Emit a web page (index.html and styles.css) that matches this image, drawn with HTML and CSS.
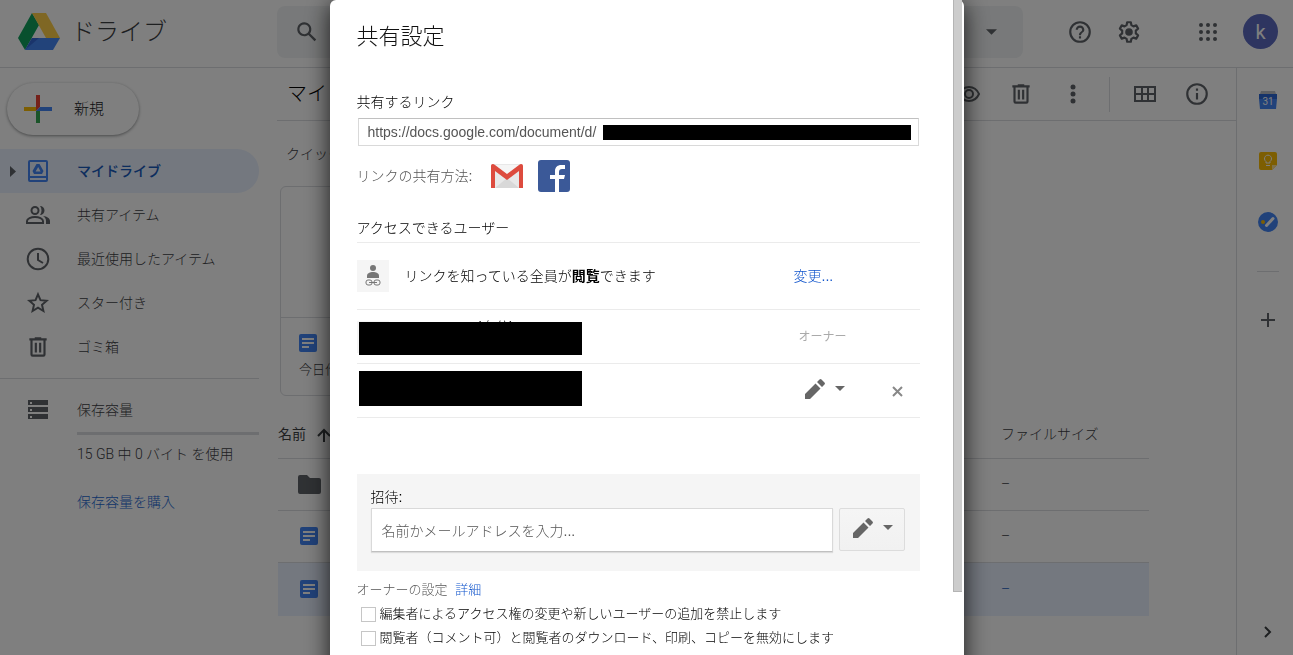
FILE: index.html
```html
<!DOCTYPE html>
<html lang="ja">
<head>
	<meta charset="UTF-8">
	<title>マイドライブ - ドライブ</title>
	<link rel="stylesheet" href="styles.css">
</head>
<body>
	<svg class="defs" aria-hidden="true">
		<symbol id="trash" viewBox="0 0 24 24"><path d="M15 4V3H9v1H4v2h1v13a2 2 0 0 0 2 2h10a2 2 0 0 0 2-2V6h1V4zm2 15H7V6h10zM9 8h2v9H9zm4 0h2v9h-2z"/></symbol>
		<symbol id="doc" viewBox="0 0 18 18"><rect width="18" height="18" rx="2" fill="#4285f4"/><path d="M3 4h12v2H3zm0 4h12v2H3zm0 4h7v2H3z" fill="#fff"/></symbol>
		<symbol id="pencil" viewBox="0 0 24 24"><path d="M2 17v5h5L17.500 11.500l-5-5zM21.500 7.500a1.400 1.400 0 0 0 0-2L18.500 2.500a1.400 1.400 0 0 0-2 0L14 5l5 5z"/></symbol>
		<symbol id="caret" viewBox="0 0 10 5"><path d="M0 0h10L5 5z"/></symbol>
	</svg>

	<div class="app">
		<header class="top">
			<a class="brand" href="#">
				<svg width="42" height="38" viewBox="0 0 42 38">
					<path d="M14 0L0 25l7 12L21 12z" fill="#11a05c"/>
					<path d="M14 0h14l14 25H28z" fill="#ffcf48"/>
					<path d="M14 25h28l-7 12H7z" fill="#4587f4"/>
					<path d="M14 25l7 0-14 12z" fill="#3569d6"/>
				</svg>
				<span>ドライブ</span>
			</a>
			<div class="search">
				<button class="ic" aria-label="検索"><svg width="26" height="26" viewBox="0 0 24 24"><path d="M20.500 19l-5.700-5.700a6.500 6.500 0 1 0-1.500 1.500l5.700 5.700zM9.500 14a4.500 4.500 0 1 1 0-9 4.500 4.500 0 0 1 0 9z"/></svg></button>
				<button class="ic" aria-label="検索オプション"><svg width="11" height="6"><use href="#caret"/></svg></button>
			</div>
			<div class="top-icons">
				<button class="ic" aria-label="サポート"><svg width="26" height="26" viewBox="0 0 24 24"><path d="M11 18h2v-2h-2zM12 2a10 10 0 1 0 0 20 10 10 0 0 0 0-20zm0 18a8 8 0 1 1 0-16 8 8 0 0 1 0 16zm0-14a4 4 0 0 0-4 4h2a2 2 0 1 1 4 0c0 2-3 1.750-3 5h2c0-2.250 3-2.500 3-5a4 4 0 0 0-4-4z"/></svg></button>
				<button class="ic" aria-label="設定"><svg width="26" height="26" viewBox="0 0 24 24"><path d="M10.300 3h3.400l.5 2.700 1.900 1.100 2.600-.9 1.700 3-2.100 1.800v2.600l2.100 1.800-1.700 3-2.600-.9-1.900 1.100-.5 2.700h-3.400l-.5-2.700-1.900-1.100-2.600.9-1.700-3 2.100-1.800v-2.600L3.600 8.900l1.700-3 2.600.9 1.900-1.100z" fill="none" stroke="#5f6368" stroke-width="2" stroke-linejoin="round"/><circle cx="12" cy="12" r="3.500"/></svg></button>
				<button class="ic apps" aria-label="Google アプリ"><svg width="18" height="18" viewBox="0 0 18 18"><g><circle cx="2" cy="2" r="2"/><circle cx="9" cy="2" r="2"/><circle cx="16" cy="2" r="2"/><circle cx="2" cy="9" r="2"/><circle cx="9" cy="9" r="2"/><circle cx="16" cy="9" r="2"/><circle cx="2" cy="16" r="2"/><circle cx="9" cy="16" r="2"/><circle cx="16" cy="16" r="2"/></g></svg></button>
				<button class="avatar">k</button>
			</div>
		</header>

		<div class="body">
			<nav class="side">
				<button class="new">
					<svg width="28" height="28" viewBox="0 0 28 28"><path d="M12 0h4v12l-4 4z" fill="#ea4335"/><path d="M0 12h12v4H0z" fill="#fbbc04"/><path d="M16 12h12v4H16l-4 0z" fill="#4285f4"/><path d="M12 16h4v12h-4z" fill="#34a853"/></svg>
					<span>新規</span>
				</button>
				<a class="item on" href="#">
					<svg class="tri" width="6" height="11" viewBox="0 0 6 11"><path d="M0 0l6 5.500L0 11z"/></svg>
					<svg width="24" height="24" viewBox="0 0 24 24"><path d="M4 1h16a2 2 0 0 1 2 2v18a2 2 0 0 1-2 2H4a2 2 0 0 1-2-2V3a2 2 0 0 1 2-2zm0 2v14h16V3zm0 16v2h16v-2z" fill="#4285f4" fill-rule="evenodd"/><path d="M10.500 5h3l4 7-1.500 3H8l-1.500-3zm1.700 3L9.600 12.500h5z" fill="#4285f4" fill-rule="evenodd"/></svg>
					<span>マイドライブ</span>
				</a>
				<a class="item" href="#">
					<svg width="26" height="24" viewBox="0 0 26 24"><g fill="none" stroke="#5f6368" stroke-width="2"><circle cx="10" cy="7.500" r="3.500"/><path d="M2 20v-2c0-2.500 4-4 8-4s8 1.500 8 4v2z"/></g><path d="M15 3a4.500 4.500 0 0 1 0 9c2-2.500 2-6.500 0-9zM18 13c4 .5 7 2.300 7 5v3h-4v-3c0-2-1-3.700-3-5z"/></svg>
					<span>共有アイテム</span>
				</a>
				<a class="item" href="#">
					<svg width="26" height="26" viewBox="0 0 26 26"><g fill="none" stroke="#5f6368" stroke-width="2"><circle cx="13" cy="13" r="10.300"/><path d="M13 7v7l5 3"/></g></svg>
					<span>最近使用したアイテム</span>
				</a>
				<a class="item" href="#">
					<svg width="26" height="26" viewBox="0 0 24 24"><path d="M12 4l2.300 5.400 5.700.5-4.300 3.800 1.300 5.700-5-3.100-5 3.100 1.300-5.700L4 9.900l5.700-.5z" fill="none" stroke="#5f6368" stroke-width="1.800"/></svg>
					<span>スター付き</span>
				</a>
				<a class="item" href="#">
					<svg width="26" height="26"><use href="#trash"/></svg>
					<span>ゴミ箱</span>
				</a>
				<div class="storage">
					<svg width="20" height="19" viewBox="0 0 20 19"><path d="M0 0h20v5H0zm0 7h20v5H0zm0 7h20v5H0z"/><path d="M2 2h2v2H2zm0 7h2v2H2zm0 7h2v2H2z" fill="#fff"/></svg>
					<div class="storage-info">
						<span>保存容量</span>
						<div class="meter"></div>
						<span>15 GB 中 0 バイト を使用</span>
						<a href="#">保存容量を購入</a>
					</div>
				</div>
			</nav>

			<main class="main">
				<div class="toolbar">
					<h1>マイドライブ</h1>
					<div class="tools">
						<button class="ic" aria-label="プレビュー"><svg width="24" height="24" viewBox="0 0 24 24"><g fill="none" stroke="#5f6368" stroke-width="2"><path d="M2 12c2-4.500 6-7 10-7s8 2.500 10 7c-2 4.500-6 7-10 7s-8-2.500-10-7z"/><circle cx="12" cy="12" r="4"/></g></svg></button>
						<button class="ic" aria-label="削除"><svg width="26" height="26"><use href="#trash"/></svg></button>
						<button class="ic" aria-label="その他の操作"><svg width="6" height="20" viewBox="0 0 6 20"><circle cx="3" cy="3" r="2.500"/><circle cx="3" cy="10" r="2.500"/><circle cx="3" cy="17" r="2.500"/></svg></button>
						<i class="sep"></i>
						<button class="ic" aria-label="グリッド表示"><svg width="22" height="16" viewBox="0 0 22 16"><path d="M0 0h22v16H0zm2 2v5h5V2zm7 0v5h4V2zm6 0v5h5V2zM2 9v5h5V9zm7 0v5h4V9zm6 0v5h5V9z" fill-rule="evenodd"/></svg></button>
						<button class="ic" aria-label="詳細を表示"><svg width="26" height="26" viewBox="0 0 24 24"><path d="M11 7h2v2h-2zm0 4h2v6h-2zM12 2a10 10 0 1 0 0 20 10 10 0 0 0 0-20zm0 18a8 8 0 1 1 0-16 8 8 0 0 1 0 16z"/></svg></button>
					</div>
				</div>
				<h2>クイック アクセス</h2>
				<div class="card">
					<div class="preview"></div>
					<div class="card-foot">
						<svg width="18" height="18"><use href="#doc"/></svg>
						<p>今日作成しました</p>
					</div>
				</div>
				<table class="files">
					<thead>
						<tr><th class="name">名前 <svg width="14" height="14" viewBox="0 0 14 14"><path d="M7 14V2M1 8l6-6 6 6" fill="none" stroke="#3c4043" stroke-width="2"/></svg></th><th class="size">ファイルサイズ</th></tr>
					</thead>
					<tbody>
						<tr><td><svg width="23" height="19" viewBox="0 0 23 19"><path d="M2 0h7l3 3h9a2 2 0 0 1 2 2v12a2 2 0 0 1-2 2H2a2 2 0 0 1-2-2V2a2 2 0 0 1 2-2z"/></svg></td><td>–</td></tr>
						<tr><td><svg class="docicon" width="18" height="18"><use href="#doc"/></svg></td><td>–</td></tr>
						<tr class="selected"><td><svg class="docicon" width="18" height="18"><use href="#doc"/></svg></td><td>–</td></tr>
					</tbody>
				</table>
			</main>

			<aside class="panel">
				<button class="ic" aria-label="カレンダー"><svg width="18" height="18" viewBox="0 0 18 18"><path d="M2 0h14l1 3H1z" fill="#bdc1c6"/><path d="M0 3h18v5l-1 10H1L0 8z" fill="#4285f4"/><path d="M0 3h18v5H0z" fill="#2a66d4"/><text x="9" y="14" text-anchor="middle">31</text></svg></button>
				<button class="ic" aria-label="Keep"><svg width="18" height="18" viewBox="0 0 18 18"><path d="M2 0h14a2 2 0 0 1 2 2v11l-5 5H2a2 2 0 0 1-2-2V2a2 2 0 0 1 2-2z" fill="#fbbc04"/><path d="M18 13h-5v5z" fill="#fde293"/><path d="M7 11V9.500a3.500 3.500 0 1 1 4 0V11zm0 2.500h4" fill="none" stroke="#fff"/></svg></button>
				<button class="ic" aria-label="ToDo リスト"><svg width="20" height="20" viewBox="0 0 20 20"><circle cx="10" cy="10" r="10" fill="#4285f4"/><circle cx="5" cy="10" r="2" fill="#fbbc04"/><path d="M8.500 13.500l6.500-7" stroke="#fff" stroke-width="3" stroke-linecap="round"/></svg></button>
				<i class="line"></i>
				<button class="ic" aria-label="アドオンを取得"><svg width="14" height="14" viewBox="0 0 14 14"><path d="M6 0h2v6h6v2H8v6H6V8H0V6h6z"/></svg></button>
				<button class="ic hide" aria-label="サイドパネルを非表示"><svg width="8" height="12" viewBox="0 0 8 12"><path d="M1 1l5 5-5 5" fill="none" stroke="#3c4043" stroke-width="2"/></svg></button>
			</aside>
		</div>
	</div>

	<div class="overlay">
		<div class="dialog" role="dialog" aria-labelledby="title">
			<div class="scroll"></div>
			<h2 id="title">共有設定</h2>
			<label class="label" for="link">共有するリンク</label>
			<div class="link">
				<input id="link" type="text" value="https://docs.google.com/document/d/" readonly>
				<span class="mask"></span>
			</div>
			<div class="via">
				<span>リンクの共有方法:</span>
				<a href="#" aria-label="Gmail"><svg width="34" height="26" viewBox="0 0 34 26"><rect x="1" y="1" width="32" height="24" rx="2" fill="#e8e8e8"/><path d="M5 25l12-10 12 10z" fill="#d8d8d8"/><path d="M3 2l14 11L31 2z" fill="#f5f5f5"/><path d="M1 25V3c0-2 2-3 4-1l12 9 12-9c2-2 4-1 4 1v22h-4V8l-12 9L5 8v17z" fill="#dd4b3e"/></svg></a>
				<a href="#" aria-label="Facebook"><svg width="32" height="32" viewBox="0 0 32 32"><rect width="32" height="32" rx="3" fill="#3b5998"/><path d="M17 32V19h-5v-4h5v-4c0-4 3-6 6-6h4v4h-3c-2 0-3 1-3 3v3h6l-1 4h-5v13z" fill="#fff"/></svg></a>
			</div>
			<h3>アクセスできるユーザー</h3>
			<ul class="people">
				<li class="anyone">
					<span class="face"><svg width="16" height="22" viewBox="0 0 16 22"><circle cx="8" cy="3" r="3"/><path d="M2 13v-2c0-3 3-4 6-4s6 1 6 4v2z"/><g fill="none" stroke="#777"><rect x="1" y="15" width="6" height="5" rx="2"/><rect x="9" y="15" width="6" height="5" rx="2"/><path d="M4 17.500h8"/></g></svg></span>
					<span class="who">リンクを知っている全員が<b>閲覧</b>できます</span>
					<a class="change" href="#">変更...</a>
				</li>
				<li>
					<span class="face"></span>
					<span class="self">(自分)</span>
					<span class="mask"></span>
					<span class="owner">オーナー</span>
				</li>
				<li>
					<span class="mask tall"></span>
					<button class="role" aria-label="編集者"><svg width="24" height="24"><use href="#pencil"/></svg><svg width="10" height="5"><use href="#caret"/></svg></button>
					<button class="remove" aria-label="削除"><svg width="11" height="11" viewBox="0 0 11 11"><path d="M1 1l9 9M10 1l-9 9" stroke="#888" stroke-width="2"/></svg></button>
				</li>
			</ul>
			<div class="invite">
				<label for="invite">招待:</label>
				<div class="invite-row">
					<input id="invite" type="text" placeholder="名前かメールアドレスを入力...">
					<button class="role boxed" aria-label="権限"><svg width="24" height="24"><use href="#pencil"/></svg><svg width="10" height="5"><use href="#caret"/></svg></button>
				</div>
			</div>
			<div class="owner-set">
				<p>オーナーの設定 <a href="#">詳細</a></p>
				<label><input type="checkbox">編集者によるアクセス権の変更や新しいユーザーの追加を禁止します</label>
				<label><input type="checkbox">閲覧者（コメント可）と閲覧者のダウンロード、印刷、コピーを無効にします</label>
			</div>
		</div>
	</div>
</body>
</html>
```

FILE: styles.css
```css
*{margin: 0;padding: 0;box-sizing: border-box;}
body{height: 100vh;overflow: hidden;background: #fff;color: #3c4043;font: 300 14px/20px Roboto, "Noto Sans CJK JP", sans-serif;}
svg{display: block;flex: none;fill: #5f6368;}
.defs{position: absolute;width: 0;height: 0;}
a{color: #1155cc;text-decoration: none;}
button{border: 0;background: none;font: inherit;color: inherit;}
input{font: inherit;border-radius: 0;outline: 0;}
ul{list-style: none;}
.ic{display: flex;align-items: center;justify-content: center;width: 40px;height: 40px;flex: none;}

/* header */
.app{display: flex;flex-direction: column;height: 100vh;}
.top{display: flex;align-items: center;height: 68px;padding: 0 15px 4px 18px;border-bottom: 1px solid #dadce0;flex: none;}
.brand{display: flex;align-items: center;gap: 11px;width: 259px;font-size: 24px;line-height: 32px;color: #3c4043;}
.search{display: flex;align-items: center;justify-content: space-between;flex: 1;height: 52px;padding: 0 12px 0 10px;background: #f1f3f4;border-radius: 8px;}
.top-icons{display: flex;align-items: center;gap: 9px;margin-left: 37px;}
.apps{margin-left: 30px;}
.avatar{width: 35px;height: 35px;margin-left: 6px;border-radius: 50%;background: #5c6bc0;color: #fff;font-size: 20px;font-weight: 400;}

/* left navigation */
.body{display: flex;flex: 1;min-height: 0;}
.side{width: 259px;flex: none;}
.new{display: flex;align-items: center;gap: 22px;width: 132px;height: 52px;margin: 15px 0 14px 7px;padding-left: 17px;border-radius: 26px;box-shadow: 0 1px 2px rgba(60,64,67,.3), 0 1px 3px 1px rgba(60,64,67,.2);font-size: 15px;color: #202124;}
.item{position: relative;display: grid;grid-template-columns: 76px 1fr;column-gap: 1px;align-items: center;height: 44px;color: #3c4043;}
.item svg{justify-self: center;}
.item.on{background: #e8f0fe;border-radius: 0 22px 22px 0;color: #185abc;font-weight: 500;}
.item .tri{position: absolute;left: 10px;}
.storage{display: grid;grid-template-columns: 76px 1fr;column-gap: 1px;margin-top: 9px;padding-top: 21px;border-top: 1px solid #dadce0;}
.storage > svg{justify-self: center;}
.storage-info{display: flex;flex-direction: column;}
.meter{height: 3px;margin: 12px 0 9px;background: #dadce0;}
.storage-info a{margin-top: 28px;color: #1a67d2;}

/* file list */
.main{flex: 1;min-width: 0;margin-left: 18px;}
.toolbar{display: flex;align-items: center;justify-content: space-between;height: 53px;padding: 0 19px 0 10px;border-bottom: 1px solid #dadce0;color: #000;}
.toolbar h1{font-size: 20px;font-weight: 300;}
.tools{display: flex;align-items: center;gap: 12px;}
.sep{width: 1px;height: 35px;margin: 0 3px 0 4px;background: #dadce0;}
.main h2{margin: 23px 0 22px 9px;font-size: 14px;font-weight: 300;}
.card{width: 220px;height: 210px;margin-left: 3px;border: 1px solid #dadce0;border-radius: 6px;}
.preview{height: 131px;border-bottom: 1px solid #dadce0;}
.card-foot{padding: 16px 18px;font-size: 13px;}
.card-foot p{margin-top: 8px;}
.files{width: calc(100% - 88px);margin: 14px 0 0 1px;border-collapse: collapse;table-layout: fixed;text-align: left;}
.files th{height: 48px;border-bottom: 1px solid #dadce0;font-weight: 300;}
.files th.name{font-weight: 400;}
.files .name svg{display: inline-block;margin-left: 8px;vertical-align: -3px;}
.files .size{width: 148px;}
.files td{height: 52px;border-bottom: 1px solid #dadce0;}
.files td svg{margin-left: 20px;}
.files td .docicon{margin-left: 22px;}
.files .selected td{height: 54px;background: #e8f0fe;color: #185abc;border: 0;}

/* add-on panel */
.panel{display: flex;flex-direction: column;align-items: center;gap: 21px;width: 57px;padding: 12px 0 3px 6px;border-left: 1px solid #dadce0;}
.panel text{fill: #fff;font: 10px Roboto, sans-serif;}
.panel .line{width: 22px;height: 1px;margin: 8px 0 7px;background: #dadce0;}
.panel .hide{margin-top: auto;}

/* share dialog */
.overlay{position: fixed;inset: 0;display: flex;justify-content: center;align-items: flex-start;overflow: hidden;background: rgba(0,0,0,.5);}
.dialog{position: relative;width: 634px;max-width: 100%;min-height: 100vh;padding: 22px 44px 40px 27px;border-radius: 6px 6px 0 0;background: #fff;box-shadow: 0 4px 24px rgba(0,0,0,.8);color: #000;font-family: "Liberation Sans", "Noto Sans CJK JP", sans-serif;}
.scroll{position: absolute;top: 0;right: 2px;width: 9px;height: 592px;background: #ccc;border: solid #b4b4b4;border-width: 0 0 1px 1px;}
.dialog h2{font-size: 22px;line-height: 30px;font-weight: 300;color: #111;}
.label{display: block;margin-top: 40px;}
.link{position: relative;margin: 6px 1px 0;}
.link input{display: block;width: 100%;height: 28px;padding: 0 9px;border: 1px solid #d9d9d9;border-top-color: #c0c0c0;color: #555;}
.mask{background: #000;}
.link .mask{position: absolute;top: 7px;left: 245px;right: 8px;height: 15px;}
.via{display: flex;align-items: center;gap: 14px;margin-top: 14px;color: #555;}
.via span{margin-right: 4px;}
.dialog h3{margin-top: 26px;padding-bottom: 4px;border-bottom: 1px solid #ebebeb;font-size: 14px;font-weight: 300;}
.people li{position: relative;display: flex;align-items: center;height: 54px;border-bottom: 1px solid #ebebeb;}
.people .anyone{height: 67px;}
.face{display: flex;align-items: center;justify-content: center;width: 32px;height: 32px;background: #f5f5f5;}
.face svg{fill: #777;}
.who{margin-left: 16px;}
.who b{font-weight: 700;}
.change{position: absolute;left: 437px;}
.self{position: absolute;top: 7px;left: 120px;}
.people .mask{position: absolute;top: 12px;left: 2px;width: 223px;height: 33px;}
.people .tall{top: 7px;height: 35px;}
.owner{position: absolute;left: 442px;font-size: 12px;font-weight: 400;color: #aaa;}
.role{display: flex;align-items: center;gap: 8px;padding-bottom: 4px;}
.role svg{fill: #666;}
.people .role{margin-left: auto;}
.remove{margin: 2px 17px 0 47px;}
.invite{margin-top: 56px;padding: 13px 15px 19px 14px;background: #f5f5f5;}
.invite label{display: block;}
.invite-row{display: flex;gap: 6px;margin-top: 1px;}
.invite input{flex: 1;min-width: 0;height: 44px;padding: 2px 10px 0;border: 1px solid #d9d9d9;border-bottom-color: #c0c0c0;box-shadow: 0 1px 1px rgba(0,0,0,.1);}
.invite input::placeholder{color: #555;}
.boxed{justify-content: center;width: 66px;height: 43px;background: linear-gradient(#f5f5f5,#f1f1f1);border: 1px solid #dcdcdc;border-radius: 2px;}
.owner-set{display: flex;flex-direction: column;gap: 4px;margin-top: 9px;font-size: 13px;}
.owner-set p{color: #555;}
.owner-set p a{margin-left: 4px;}
.owner-set label{display: flex;align-items: center;gap: 4px;margin-left: 4px;white-space: nowrap;}
.owner-set input{appearance: none;width: 15px;height: 15px;border: 1px solid #c6c6c6;background: #fff;}
```
